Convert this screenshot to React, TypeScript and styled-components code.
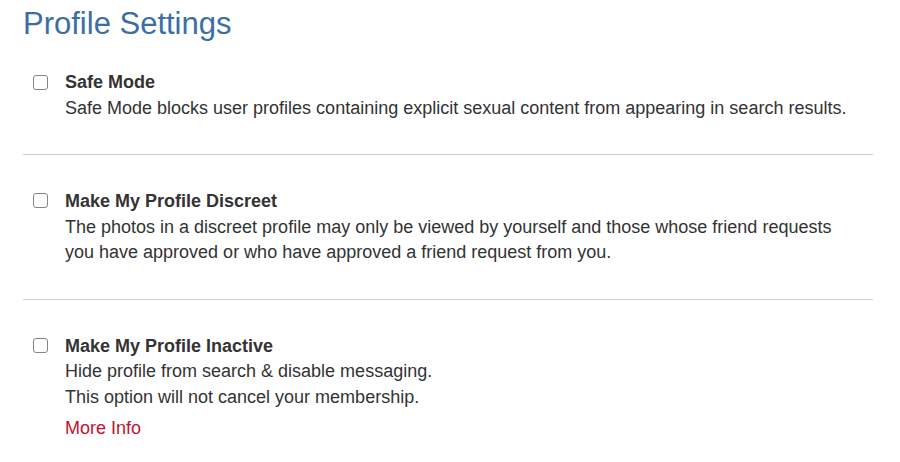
import React from "react";
import styled, { createGlobalStyle } from "styled-components";

const Global = createGlobalStyle`
  html, body { margin: 0; padding: 0; background: #fff; }
  body { font-family: "Liberation Sans", Arial, sans-serif; color: #333; }
`;

const Page = styled.div`
  width: 850px;
  margin-left: 23px;
  padding-top: 7px;
`;

const Title = styled.h1`
  margin: 0;
  font-size: 31px;
  line-height: 34px;
  font-weight: 400;
  color: #3c6ea6;
`;

const Section = styled.div`
  display: flex;
  padding: 34px 15px 32.5px 10px;
  &:first-of-type { padding-top: 29px; }
  & + & { border-top: 1px solid #cfcfcf; }
`;

const CheckCol = styled.div`
  width: 32px;
  flex: none;
  padding-top: 4.5px;
`;

const Box = styled.input.attrs({ type: "checkbox" })`
  appearance: none;
  margin: 0;
  width: 15px;
  height: 15px;
  border: 1px solid #858585;
  border-radius: 3px;
  background: #fff;
  box-sizing: border-box;
  display: block;
`;

const Body = styled.div`
  flex: 1;
  font-size: 18px;
  line-height: 25.7px;
`;

const Label = styled.div`
  font-weight: 700;
  color: #333;
`;

const Desc = styled.div`
  color: #333;
`;

const MoreLink = styled.a`
  display: block;
  margin-top: 5px;
  color: #c8102e;
  text-decoration: none;
`;

export default function App() {
  return (
    <>
      <Global />
      <Page>
        <Title>Profile Settings</Title>
        <Section>
          <CheckCol><Box /></CheckCol>
          <Body>
            <Label>Safe Mode</Label>
            <Desc>Safe Mode blocks user profiles containing explicit sexual content from appearing in search results.</Desc>
          </Body>
        </Section>
        <Section>
          <CheckCol><Box /></CheckCol>
          <Body>
            <Label>Make My Profile Discreet</Label>
            <Desc>The photos in a discreet profile may only be viewed by yourself and those whose friend requests you have approved or who have approved a friend request from you.</Desc>
          </Body>
        </Section>
        <Section>
          <CheckCol><Box /></CheckCol>
          <Body>
            <Label>Make My Profile Inactive</Label>
            <Desc>Hide profile from search &amp; disable messaging.</Desc>
            <Desc>This option will not cancel your membership.</Desc>
            <MoreLink href="#">More Info</MoreLink>
          </Body>
        </Section>
      </Page>
    </>
  );
}
